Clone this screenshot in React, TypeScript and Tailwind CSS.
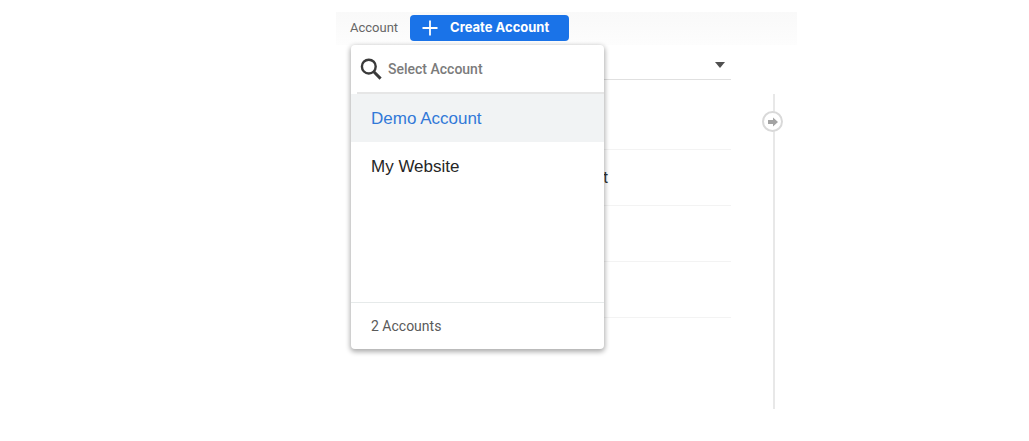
import { useState } from "react";
import clsx from "clsx";

const accounts = ["Demo Account", "My Website"];

const settings = ["", "t", "", ""];

function SearchIcon() {
  return (
    <svg viewBox="0 0 22 22" className="h-[22px] w-[22px] shrink-0" fill="none" stroke="#3a3a3a">
      <circle cx="8.8" cy="8.6" r="6.9" strokeWidth="2.4" />
      <path d="M13.8 13.8L20.6 20.6" strokeWidth="3" />
    </svg>
  );
}

function PlusIcon() {
  return (
    <svg viewBox="0 0 16 16" className="h-4 w-4 shrink-0" fill="none" stroke="#fff" strokeWidth="1.8">
      <path d="M8 0.5V15.5M0.5 8H15.5" />
    </svg>
  );
}

function AccountMenu() {
  const [selected, setSelected] = useState(accounts[0]);

  return (
    <div className="absolute top-0 left-0 flex w-[253px] flex-col rounded-sm bg-white shadow-[0_2px_5px_1px_rgba(0,0,0,0.32)]">
      <label className="ml-[6px] flex h-[49px] items-center gap-1.5 border-b-2 border-[#e6e6e6] pl-[3px]">
        <SearchIcon />
        <input
          type="text"
          aria-label="Select Account"
          placeholder="Select Account"
          className="w-full min-w-0 bg-transparent font-['Roboto',sans-serif] text-sm font-medium outline-none placeholder:text-[#7b7b7b]"
        />
      </label>
      <ul className="h-[208px] font-['Liberation_Sans',sans-serif] text-[17px]">
        {accounts.map((account) => (
          <li key={account}>
            <button
              type="button"
              onClick={() => setSelected(account)}
              className={clsx(
                "flex h-12 w-full items-center px-5 pt-[2px] text-left",
                account === selected ? "bg-[#f1f3f4] text-[#3179d8]" : "text-[#262626]"
              )}
            >
              {account}
            </button>
          </li>
        ))}
      </ul>
      <p className="flex h-[47px] items-center border-t border-[#e6eaea] px-5 font-['Roboto',sans-serif] text-sm text-[#5a5a5a]">
        {accounts.length} Accounts
      </p>
    </div>
  );
}

function Divider() {
  return (
    <div className="relative mt-[49px] flex w-[66px] justify-center">
      <div className="ml-5 w-[2px] bg-[#e8e8e8]" />
      <button
        type="button"
        aria-label="Expand"
        className="absolute top-[17px] left-[31px] flex h-[21px] w-[21px] items-center justify-center rounded-full border-2 border-[#d9d9d9] bg-white"
      >
        <svg viewBox="0 0 10 10" className="h-[10px] w-[10px]" fill="#a3a3a3">
          <path d="M0 3H5V0.5L10 5L5 9.5V7H0Z" />
        </svg>
      </button>
    </div>
  );
}

export default function App() {
  return (
    <div className="min-h-screen bg-white pt-3 pr-58 pb-8 pl-84">
      <header className="flex h-[33px] items-center gap-3 bg-linear-to-b from-[#f9f9f9] to-[#fdfdfd] pb-[2px] pl-[14px] font-['Roboto',sans-serif]">
        <span className="text-[13px] text-[#666]">Account</span>
        <button
          type="button"
          className="flex h-[26px] items-center gap-3 rounded bg-[#1a73e8] pr-5 pl-3 font-['Inter',sans-serif] text-[13px] font-bold text-white"
        >
          <PlusIcon />
          Create Account
        </button>
      </header>
      <main className="flex h-[364px] pl-[15px]">
        <div className="relative flex-1">
          <button
            type="button"
            aria-label="Choose account"
            className="flex h-[35px] w-full items-center justify-end border-b border-[#e0e0e0] pt-2 pr-[6px] pb-[2px]"
          >
            <svg viewBox="0 0 10 6" className="h-[6px] w-[10px]" fill="#505050">
              <path d="M0 0H10L5 6Z" />
            </svg>
          </button>
          <ul className="mt-[14px] font-['Roboto',sans-serif] text-base text-[#333]">
            {settings.map((label, i) => (
              <li key={i} className="flex h-14 items-center border-b border-[#f3f3f3] pl-63">
                {label}
              </li>
            ))}
          </ul>
          <AccountMenu />
        </div>
        <Divider />
      </main>
    </div>
  );
}
